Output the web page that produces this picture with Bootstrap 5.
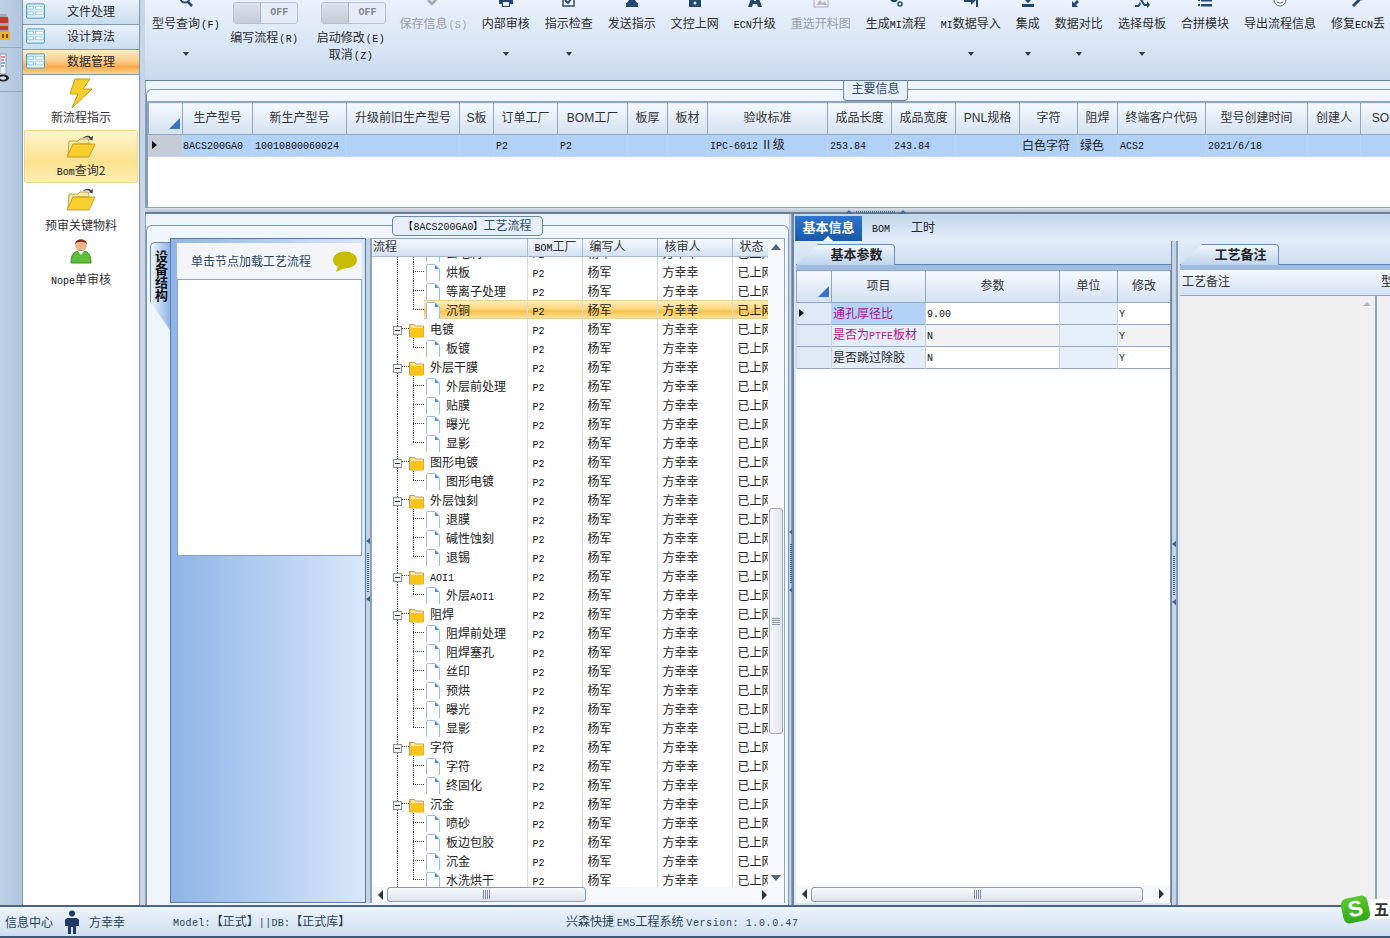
<!DOCTYPE html>
<html lang="zh-CN">
<head>
<meta charset="utf-8">
<title>兴森快捷 EMS工程系统</title>
<link href="https://cdn.jsdelivr.net/npm/bootstrap@5.3.0/dist/css/bootstrap.min.css" rel="stylesheet">
<style>
html,body{margin:0;height:938px;width:1390px;overflow:hidden}
body{font-family:"Noto Sans CJK SC","Liberation Sans",sans-serif;font-size:12px;line-height:14px;color:#222;background:#cfdeef}
.ln{font-family:"Liberation Mono",monospace;font-size:10px;line-height:1;color:#111}
.la{font-family:"Liberation Sans",sans-serif;font-size:12px;line-height:1}
.appw{width:1390px;height:938px}
.rail{width:23px;flex:none;background:linear-gradient(90deg,#bccfe4,#b0c6df);border-right:1px solid #7f95ad}
.railbox{height:48px;border-bottom:1px solid #94a9c1}
.railbox2{height:44px;border-bottom:1px solid #94a9c1}
.railbox svg,.railbox2 svg{display:block}
.navp{width:117px;flex:none;background:#fff;border-right:1px solid #8096ad}
.navh{height:25px;flex:none;background:linear-gradient(#eaf2fb,#c9dbef);border-bottom:1px solid #7f9ab8;padding-bottom:2px}
.navh span{flex:1;text-align:center;padding-right:2px;color:#2a2a2a}
.navh svg{margin-left:3px;flex:none}
.navh.act{background:linear-gradient(#ffeec9 0,#fbc783 50%,#f8a94b 70%,#fcd389)}
.navi{color:#333;text-align:center}
.navi svg{display:block;margin:0 auto}
.ni1{height:55px;padding-top:3px}
.ni1 span{display:block;margin-top:1px}
.ni2{height:53px;padding-top:3px;margin:0 1px;background:linear-gradient(#fff5cf,#fbe28f 60%,#fdeeb4);border:1px solid #efd684;border-radius:2px}
.ni2 span{display:block;margin-top:5px}
.ni3{height:53px;padding-top:4px}
.ni3 span{display:block;margin-top:7px}
.ni4{height:54px;padding-top:1px}
.ni4 span{display:block;margin-top:7px}
.vsp{width:5px;flex:none;background:#c7d6e7}
.mainc{width:1245px;flex:none}
.tbar{height:81px;flex:none;background:linear-gradient(#eaf2fc,#d9e6f5 55%,#c9d9ec);border-bottom:1px solid #65809e;padding-left:7px;overflow:hidden;gap:15px}
.tit{flex:none;text-align:center;color:#2b2b2b;white-space:nowrap;position:relative}
.tit svg.ic{display:block;margin:-8px auto 8px;height:16px;width:16px}
.tit .cap{display:block;height:14px}
.cap .lp{margin-left:1px;letter-spacing:.4px}
.tit.off,.tit.off .ln{color:#9a9fa6}
.car{display:block;width:0;height:0;border:3px solid transparent;border-top:4px solid #2f3a48;border-bottom:0;margin:22px auto 0}
.tog{display:flex;width:65px;height:22px;margin:2px 0 6px;border:1px solid #b5c3d4;border-radius:3px;overflow:hidden;background:#e6edf6}
.tog i{width:27px;flex:none;background:linear-gradient(#dce3ec,#c3cdd9);border-right:1px solid #a9b7c8}
.tog b{flex:1;text-align:center;font:bold 10px/20px "Liberation Mono",monospace;color:#7d8794}
.tit.tw{margin-left:-5px;margin-right:2px}
.tit.tw .tog{margin-left:3px}
.tit.tw2{margin-right:-2px}
.tit.tw2 .tog{margin-left:6px}
.tit.tw2 .cap+.cap{margin-top:3px}
.tit.sv{margin-right:-1px}
.grpa{height:127px;flex:none;background:#edf4fc;position:relative;padding-top:8px;border-left:1px solid #8ca0b7}
.frm{border:1px solid #7f95ae;border-right:0;border-bottom:0;border-top-left-radius:6px;height:100%;background:#f0f6fd;padding-top:11px;overflow:hidden}
.gcap{position:absolute;z-index:3;background:#e7f0fa;border:1px solid #6f88a5;border-top:0;border-radius:0 0 4px 4px;color:#2e4a6a;text-align:center;white-space:nowrap}
.gc1{left:697px;top:0;width:65px;height:20px;line-height:14px}
.gc2{left:246px;top:2px;width:151px;height:20px;line-height:15px;border-top:1px solid #6f88a5;border-radius:4px}
.hsp{height:6px;flex:none;background:linear-gradient(#dbe3ee,#b5c2d2);border-bottom:2px solid #6c7f95;position:relative}
.hspm{position:absolute;left:700px;top:2px;width:62px;height:3px;display:flex;align-items:center;justify-content:space-between;z-index:4}
.tri{width:0;height:0;border:4px solid transparent;border-top:0;border-bottom:4px solid #4d6c92;flex:none}
.dots{flex:1;margin:0 3px;height:2px;background:repeating-linear-gradient(90deg,#4d6c92 0 1px,transparent 1px 2px)}
.gwrap{height:107px;background:#fff;border:1px solid #8ea4bc;border-right:0;overflow:hidden}
.xg{--bs-table-bg:transparent;--bs-border-color:#92a7be;table-layout:fixed;margin:0;border-color:#92a7be}
.xg th,.xg td{padding:0 2px;font-weight:400;white-space:nowrap;overflow:hidden;vertical-align:middle;color:#222}
.xg thead th{text-align:center;background:linear-gradient(#f5f9fe,#d3e1f1);color:#333}
.g1{width:1252px}
.g1 thead tr{height:32px}
.g1 thead th{padding-bottom:3px}
.g1 tbody tr{height:22px}
.g1 tbody td{background:#b1d1f6;border-color:#bcd6f5;border-bottom:1px solid #c3daf6;padding-bottom:2px}
.g1 tbody td.ind{background:#c6ccd6}
.g1 col:nth-child(1){width:34px}.g1 col:nth-child(2){width:70px}.g1 col:nth-child(3){width:94px}.g1 col:nth-child(4){width:113px}.g1 col:nth-child(5){width:34px}.g1 col:nth-child(6){width:64px}.g1 col:nth-child(7){width:70px}.g1 col:nth-child(8){width:40px}.g1 col:nth-child(9){width:40px}.g1 col:nth-child(10){width:120px}.g1 col:nth-child(11){width:64px}.g1 col:nth-child(12){width:64px}.g1 col:nth-child(13){width:64px}.g1 col:nth-child(14){width:58px}.g1 col:nth-child(15){width:40px}.g1 col:nth-child(16){width:88px}.g1 col:nth-child(17){width:102px}.g1 col:nth-child(18){width:53px}.g1 col:nth-child(19){width:40px}
.corner{display:block;margin-left:auto;margin-top:12px}
.arr{display:block;width:0;height:0;border:4px solid transparent;border-right:0;border-left:5px solid #111;margin-left:1px}
.botm{flex:1;min-height:0}
.lpane{width:644px;flex:none;background:#edf4fc;position:relative;padding-top:11px;border-left:1px solid #8ca0b7}
.lframe{height:100%;border:1px solid #7f95ae;border-bottom:0;border-radius:6px 6px 0 0;background:#f0f6fd;padding:12px 3px 2px 3px}
.sidew{width:216px;flex:none;height:100%}
.vtab{width:20px;flex:none;height:88px;margin-top:4px;background:linear-gradient(90deg,#f0f5fc,#8fb4e6);border:1px solid #6b8cb4;border-right:0;border-radius:5px 0 0 0;clip-path:polygon(0 0,100% 0,100% 100%,0 68%);writing-mode:vertical-rl;text-orientation:upright;font-weight:700;font-size:13px;line-height:17px;padding:7px 0 0 0;color:#111}
.spanel{flex:1;background:linear-gradient(90deg,#8fb4e6,#d8e8fb);border:1px solid #587ba6;padding:4px 3px 0 6px}
.shead{height:36px;background:#f3f5f9;color:#2c4766;padding:0 5px 0 14px}
.sbox{height:277px;background:#fff;border:1px solid #8ea3c4}
.vsp2{width:5px;flex:none;background:#c6d3e3;position:relative;border-right:1px solid #8ea3bd}
.mk{position:absolute;left:0;display:block;width:0;height:0;border:3px solid transparent;border-left:0;border-right:4px solid #3f6190}
.m1{top:300px}.m2{top:358px}.m3{top:315px}.m4{top:373px}
.mkd{position:absolute;left:1px;width:2px;height:40px;background:repeating-linear-gradient(#3f6190 0 1px,transparent 1px 2px)}
.d1{top:315px}.d2{top:330px}
.vsp2.thin{width:3px}
.treew{flex:1;min-width:0;background:#fff;border:1px solid #8ea4bc;border-bottom:0;height:100%}
.treev{height:630px;overflow:hidden}
.g2{width:397px;border:0}
.g2 col:nth-child(1){width:155px}.g2 col:nth-child(2){width:55px}.g2 col:nth-child(3){width:75px}.g2 col:nth-child(4){width:75px}.g2 col:nth-child(5){width:37px}
.g2 thead tr,.g2 tbody tr{border-width:0}
.g2 thead tr{height:17px}
.g2 thead th{text-align:left;border-color:#a6b9cf;border-width:0 1px 1px 0;padding:0 0 0 7px;line-height:14px;height:17px;vertical-align:top}
.g2 thead th:first-child{padding-left:1px}
.g2 tbody tr{height:19px}
.g2 tbody td{border-width:0 1px 0 0;border-color:#d5dbe4;padding:0 0 0 5px;line-height:19px;height:19px}
.body2{margin-top:-14px}
.g2 tbody td.tc{--vd:repeating-linear-gradient(#444 0 1px,transparent 1px 2px);--hd:repeating-linear-gradient(90deg,#444 0 1px,transparent 1px 2px);padding:0;border-color:#d5dbe4}
td.fo{background:var(--vd) 25px 0/1px 100% no-repeat,var(--hd) 30px 50%/8px 1px no-repeat!important;padding-left:21px!important}
td.le{background:var(--vd) 25px 0/1px 100% no-repeat,var(--vd) 41px 0/1px 100% no-repeat,var(--hd) 41px 50%/12px 1px no-repeat!important;padding-left:54px!important}
td.le.lst{background:var(--vd) 25px 0/1px 100% no-repeat,var(--vd) 41px 0/1px 50% no-repeat,var(--hd) 41px 50%/12px 1px no-repeat!important}
td.le.sl{background:linear-gradient(#e6d08e,#e6d08e) 52px 0/100% 1px no-repeat,linear-gradient(#e6d08e,#e6d08e) 52px 100%/100% 1px no-repeat,linear-gradient(#fff0c4,#fbd77e 45%,#f9c24e 60%,#fde7a6) 52px 0/100% 100% no-repeat,var(--vd) 25px 0/1px 100% no-repeat,var(--vd) 41px 0/1px 50% no-repeat,var(--hd) 41px 50%/12px 1px no-repeat!important}
tr.sr td:not(.tc){background:linear-gradient(#fff0c4,#fbd77e 45%,#f9c24e 60%,#fde7a6);box-shadow:inset 0 1px #e6d08e,inset 0 -1px #e6d08e}
.tc svg{vertical-align:middle;margin-top:-2px;margin-bottom:-2px}
.tc .fi{margin-left:7px;margin-right:6px}
.tc .di{margin-right:6px}
.vbar{width:16px;flex:none;background:#f6f8fc;padding-top:5px;height:647px}
.vbar .ua{display:block;margin:0 auto;width:0;height:0;border:5px solid transparent;border-top:0;border-bottom:6px solid #5a6674}
.vth{height:226px;margin-top:258px;background:linear-gradient(90deg,#f6f8fc,#dfe6ef);border:1px solid #9aa9bb;border-radius:3px;width:14px;margin-left:1px}
.vth i{display:block;width:8px;height:7px;background:repeating-linear-gradient(#8896a8 0 1px,transparent 1px 2px)}
.vbar .da{display:block;margin:141px auto 0;width:0;height:0;border:5px solid transparent;border-bottom:0;border-top:6px solid #5a6674}
.hbar{height:16px;background:#f6f8fc;flex:none;padding:0 6px}
.hth{background:linear-gradient(#f8fafd,#dde4ee);border:1px solid #8b9aad;border-radius:3px;height:15px;flex:none}
.hth.wd1{width:199px}
.hth i{display:block;width:7px;height:9px;background:repeating-linear-gradient(90deg,#7f8da0 0 1px,transparent 1px 2px)}
.la1,.ra1{width:0;height:0;border:5px solid transparent;flex:none}
.la1{border-left:0;border-right:5px solid #333}
.ra1{border-right:0;border-left:5px solid #333}
.sp16{width:11px;flex:none}
.rpane{flex:1;min-width:0;position:relative;border-left:2px solid #6f86a3;background:#d9e6f5}
.rtabs{height:27px;flex:none;background:linear-gradient(#c3d6ec,#e4eefa);padding:2px 0 0 1px}
.rt{height:25px;line-height:22px;text-align:center}
.rt1{width:67px;background:linear-gradient(#2f74cd,#195aa8);color:#fff;font-weight:700;font-size:13px;position:relative}
.rt1:after{content:"";position:absolute;left:28px;bottom:0;width:0;height:0;border:5px solid transparent;border-top:0;border-bottom:5px solid #fff}
.rt2{margin-left:10px;width:17px}
.rt3{margin-left:22px;width:24px}
.rsub{flex:1;min-height:0}
.pane1{width:377px;flex:none;padding-left:2px;background:#dbe7f5}
.pane2{flex:1;min-width:0;padding-left:2px;background:#dbe7f5;border-left:2px solid #8aa0ba}
.vsp3{width:5px;flex:none;background:#c6d3e3;position:relative;border-left:1px solid #6f86a3}
.ptabw{height:24px;flex:none;padding-top:3px;background:linear-gradient(#e1ecf8,#d0dff0);border-bottom:1px solid #5f86b6}
.ptab{width:99px;height:21px;background:linear-gradient(#f0f6fd,#bed4ed);border:1px solid #6d8eb6;border-bottom:0;border-radius:4px 4px 0 0;clip-path:polygon(22% 0,100% 0,100% 100%,0 100%);font-weight:700;font-size:13px;text-align:center;line-height:18px;padding-left:22px;color:#222}
.pband{height:5px;flex:none;background:#9fbce0}
.g3{width:374px}
.g3 col:nth-child(1){width:35px}.g3 col:nth-child(2){width:94px}.g3 col:nth-child(3){width:134px}.g3 col:nth-child(4){width:58px}.g3 col:nth-child(5){width:53px}
.g3 thead tr{height:32px}
.g3 thead th{padding-bottom:3px}
.g3 tbody tr{height:22px}
.g3 tbody td{border-color:#c4d4e6;padding:0 1px 2px}
.g3 td.ind{background:#dfe9f6}
.g3 td.itm{background:#e4eefa}
.g3 td.un{background:#e6f0fb}
.g3 tr.r1 td.itm{background:#b2d2f6;color:#a8128f}
.g3 tr.r2 td.itm,.g3 tr.r2 td.itm .ln{color:#c01082}
.g3 tr.r2 td.va,.g3 tr.r2 td.mo{background:#f2f2f2}
.pbody{flex:1;min-height:0;background:#fff;border-right:1px solid #7f95ae;overflow:hidden}
.hb3{height:18px;background:#f6f8fc;flex:none;padding:0 6px;border-right:1px solid #7f95ae;margin-bottom:2px}
.nhead{height:26px;flex:none;background:linear-gradient(#f5f9fe,#d3e1f1);border-bottom:1px solid #92a7be;padding-bottom:3px}
.nh1{width:197px;flex:none;padding-left:2px;color:#333}
.nbody{flex:1;min-height:0;background:#efefef}
.nbm{width:197px;flex:none;display:flex;justify-content:flex-end;border-right:2px solid #8aa4c4}
.nsb{width:16px;background:#f0f0f0;height:100%;padding-top:6px}
.nsb .ua{display:block;margin:0 auto;width:0;height:0;border:4px solid transparent;border-top:0;border-bottom:4px solid #b5b5b5}
.stat{height:33px;flex:none;background:linear-gradient(#edf4fc,#cfdff0);border-top:2px solid #4c6483;border-bottom:2px solid #3f5873;padding-left:5px;color:#2a3f58;white-space:nowrap;position:relative}
.stat .ln{color:#2a3f58;letter-spacing:.3px}
.stat .lv{letter-spacing:.6px}
.stat .s1{width:48px}
.stat svg{margin:0 10px 0 12px;flex:none}
.stat .s2{width:84px}
.stat .s3{width:393px}
.sogou{position:absolute;right:0;top:-11px;display:flex;align-items:center;z-index:5;width:48px;height:26px}
.sgi{width:27px;height:25px;border-radius:6px;background:linear-gradient(#5cc92f,#2ea81a);transform:rotate(-12deg);color:#fff;font:700 22px/24px "Liberation Sans",sans-serif;text-align:center;flex:none;z-index:1}
.sgt{flex:1;background:#fff;height:20px;margin-left:-2px;padding-left:7px;font-size:15px;line-height:20px;color:#333;font-weight:700;overflow:hidden}
</style>
</head>
<body>
<svg width="0" height="0" class="d-none">
 <defs>
  <symbol id="navic" viewBox="0 0 20 16"><rect x=".5" y=".5" width="19" height="15" rx="1.5" fill="#dff0fb" stroke="#3d9ab8"/><rect x="2" y="3" width="6" height="3" fill="#fff" stroke="#58b3c8" stroke-width=".7"/><rect x="2" y="9" width="6" height="3" fill="#fff" stroke="#58b3c8" stroke-width=".7"/><rect x="10" y="3" width="8" height="3" fill="#fff" stroke="#7aa" stroke-width=".5"/><rect x="10" y="9" width="8" height="3" fill="#fff" stroke="#7aa" stroke-width=".5"/></symbol>
  <symbol id="fold" viewBox="0 0 30 24"><path d="M2 21 L3 7 h9 l2-2 h8 l1 3 v2 H9z" fill="#f6e9a8" stroke="#b2932c" stroke-width=".8"/><path d="M1 23 L7 10 H29 L23 23z" fill="#f7cf2e" stroke="#b78e1c" stroke-width=".8"/><path d="M17 4 q4-4 8-1 l2-1 -.5 4.500 -4-1.500 1.500-.8 q-3-2-6.500 0" fill="#444"/></symbol>
  <symbol id="doc" viewBox="0 0 14 18"><path d="M1.5.5h7.500l4.500 4.500v11a1.500 1.500 0 0 1-1.500 1.500h-10.500a1 1 0 0 1-1-1v-15z" fill="#fbfdff" stroke="#9cbce4"/><path d="M9 .8 13 5H9z" fill="#4d8fdc"/></symbol>
  <symbol id="fld" viewBox="0 0 15 16"><path d="M.5 2.500h5l1 1.500h8v11h-14z" fill="#fbe9a4" stroke="#c9a33d"/><path d="M2 6h12.500v9H2z" fill="#fdc418"/><path d="M.5 2.500V15" stroke="#d89d27" stroke-width="2"/></symbol>
  <symbol id="exp" viewBox="0 0 9 9"><rect x=".5" y=".5" width="8" height="8" fill="#eef1f5" stroke="#8a8f96"/><path d="M2 4.500h5" stroke="#333"/></symbol>
  <symbol id="cor" viewBox="0 0 11 11"><path d="M11 0V11H0z" fill="#3a73c4"/></symbol>
 </defs>
</svg>
<div class="appw d-flex flex-column">
 <div class="d-flex flex-grow-1 overflow-hidden">
  <div class="rail">
   <div class="railbox"><svg width="22" height="47" viewBox="0 0 22 47"><path d="M0 14h6l3 5v21H0z" fill="#a9a9a9"/><path d="M0 17h8v6H0zM0 26h8v4H0z" fill="#c0392b"/><path d="M0 32h10v8H0z" fill="#e8b42a"/><path d="M2 34h2v4H2zM6 34h2v4H6z" fill="#7a4a10"/></svg></div>
   <div class="railbox2"><svg width="22" height="43" viewBox="0 0 22 43"><path d="M0 6h6v20H0z" fill="#e8eef5" stroke="#778" stroke-width=".6"/><path d="M1 9h4M1 12h3" stroke="#c33"/><path d="M1 15h4M1 18h3" stroke="#36a"/><ellipse cx="3" cy="30" rx="6" ry="3.500" fill="#222"/><ellipse cx="3" cy="30" rx="3" ry="1.800" fill="#dde"/></svg></div>
  </div>
  <div class="navp d-flex flex-column">
   <div class="navh d-flex align-items-center"><svg width="19" height="16"><use href="#navic"/></svg><span>文件处理</span></div>
   <div class="navh d-flex align-items-center"><svg width="19" height="16"><use href="#navic"/></svg><span>设计算法</span></div>
   <div class="navh act d-flex align-items-center"><svg width="19" height="16"><use href="#navic"/></svg><span>数据管理</span></div>
   <div class="navi ni1"><svg width="24" height="31" viewBox="0 0 24 31"><path d="M6 1h15l-7 10h9L3 30l6-14H1z" fill="#f5d02c" stroke="#c59a1a"/></svg><span>新流程指示</span></div>
   <div class="navi ni2"><svg width="30" height="24"><use href="#fold"/></svg><span><span class="ln d-inline m-0">Bom</span>查询2</span></div>
   <div class="navi ni3"><svg width="30" height="24"><use href="#fold"/></svg><span>预审关键物料</span></div>
   <div class="navi ni4"><svg width="22" height="28" viewBox="0 0 22 28"><circle cx="11" cy="8" r="6" fill="#e8b48a"/><path d="M5 7c0-6 12-6 12 0-2-3-10-3-12 0z" fill="#8a2318"/><path d="M1 26c0-10 4-12 10-12s10 2 10 12z" fill="#5fbd3a" stroke="#3d8a25"/><path d="M8 14l3 4 3-4z" fill="#fff"/></svg><span><span class="ln d-inline m-0">Nope</span>单审核</span></div>
  </div>
  <div class="vsp"></div>
  <div class="mainc d-flex flex-column">
   <div class="tbar d-flex align-items-start">
    <div class="tit"><svg class="ic" viewBox="0 0 16 16"><circle cx="7" cy="6" r="4.500" fill="none" stroke="#24476f" stroke-width="2"/><path d="M10 10l4 4" stroke="#24476f" stroke-width="2.500"/></svg><span class="cap">型号查询<span class="ln lp">(F)</span></span><i class="car"></i></div>
    <div class="tit tw"><div class="tog"><i></i><b>OFF</b></div><span class="cap">编写流程<span class="ln lp">(R)</span></span></div>
    <div class="tit tw2"><div class="tog"><i></i><b>OFF</b></div><span class="cap">启动修改<span class="ln lp">(E)</span></span><span class="cap">取消<span class="ln lp">(Z)</span></span></div>
    <div class="tit off sv"><svg class="ic" viewBox="0 0 16 16"><path d="M2 8l4 4 8-9" fill="none" stroke="#a0a6ad" stroke-width="2.500"/></svg><span class="cap">保存信息<span class="ln lp">(S)</span></span></div>
    <div class="tit"><svg class="ic" viewBox="0 0 16 16"><path d="M4 1h8v5H4zM1 6h14v6h-3v3H4v-3H1z" fill="#24476f"/><path d="M5 10h6v4H5z" fill="#e6eef8"/></svg><span class="cap">内部审核</span><i class="car"></i></div>
    <div class="tit"><svg class="ic" viewBox="0 0 16 16"><rect x="2" y="3" width="11" height="11" fill="#fff" stroke="#24476f" stroke-width="1.500"/><path d="M4 8l3 3 7-9" fill="none" stroke="#24476f" stroke-width="2"/></svg><span class="cap">指示检查</span><i class="car"></i></div>
    <div class="tit"><svg class="ic" viewBox="0 0 16 16"><path d="M6 1h4v7H6zM2 11h12v4H2z" fill="#24476f"/><path d="M5 8h6l2 3H3z" fill="#24476f"/></svg><span class="cap">发送指示</span></div>
    <div class="tit"><svg class="ic" viewBox="0 0 16 16"><path d="M4 7V5a4 4 0 0 1 8 0v2h2v8H2V7z" fill="#24476f"/><circle cx="8" cy="11" r="1.500" fill="#e6eef8"/></svg><span class="cap">文控上网</span></div>
    <div class="tit"><svg class="ic" viewBox="0 0 16 16"><path d="M6 1h4l5 14h-4l-1-3H6l-1 3H1zM7 9h2L8 5z" fill="#24476f" fill-rule="evenodd"/></svg><span class="cap"><span class="ln">ECN</span>升级</span></div>
    <div class="tit off"><svg class="ic" viewBox="0 0 16 16"><rect x="1" y="1" width="14" height="14" fill="#eef1f5" stroke="#aab"/><path d="M3 13l4-5 3 3 2-2 2 4z" fill="#b5bbc3"/></svg><span class="cap">重选开料图</span></div>
    <div class="tit"><svg class="ic" viewBox="0 0 16 16"><circle cx="6" cy="6" r="3" fill="none" stroke="#24476f" stroke-width="2.500"/><circle cx="12" cy="12" r="2" fill="none" stroke="#24476f" stroke-width="1.500"/></svg><span class="cap">生成<span class="ln">MI</span>流程</span></div>
    <div class="tit"><svg class="ic" viewBox="0 0 16 16"><path d="M1 6h7V3l5 5-5 5v-3H1z" fill="#24476f"/><path d="M13 1h2v14h-2z" fill="#24476f"/></svg><span class="cap"><span class="ln">MI</span>数据导入</span><i class="car"></i></div>
    <div class="tit"><svg class="ic" viewBox="0 0 16 16"><path d="M6 1h4v5h3l-5 5-5-5h3zM2 12h12v3H2z" fill="#24476f"/></svg><span class="cap">集成</span><i class="car"></i></div>
    <div class="tit"><svg class="ic" viewBox="0 0 16 16"><path d="M9 1h6v6l-2-2-3 3-2-2 3-3zM1 15V9l2 2 3-3 2 2-3 3 2 2z" fill="#24476f"/></svg><span class="cap">数据对比</span><i class="car"></i></div>
    <div class="tit"><svg class="ic" viewBox="0 0 16 16"><path d="M1 3h4l6 9h2V9l3 4-3 3v-2h-3L4 5H1zM1 13h3l2-3 1 2-2 3H1zM10 5l1-2h2V0l3 4-3 3V5z" fill="#24476f"/></svg><span class="cap">选择母板</span><i class="car"></i></div>
    <div class="tit"><svg class="ic" viewBox="0 0 16 16"><path d="M4 2h11v2.500H4zM4 7h11v2.500H4zM4 12h11v2.500H4zM1 2h2v2H1zM1 7h2v2H1zM1 12h2v2H1z" fill="#24476f"/></svg><span class="cap">合拼模块</span></div>
    <div class="tit"><svg class="ic" viewBox="0 0 16 16"><circle cx="8" cy="8" r="6" fill="#fff" stroke="#4d6c92"/><path d="M5 10q3 2.500 6 0" fill="none" stroke="#4d6c92"/></svg><span class="cap">导出流程信息</span></div>
    <div class="tit"><svg class="ic" viewBox="0 0 16 16"><path d="M2 13l7-7a4 4 0 0 1 5-5l-3 3 2 2 3-3a4 4 0 0 1-5 5l-7 7z" fill="#24476f"/></svg><span class="cap">修复<span class="ln">ECN</span>丢</span></div>
   </div>
   <div class="grpa">
    <div class="gcap gc1">主要信息</div>
    <div class="frm">
     <div class="gwrap">
      <table class="table table-bordered xg g1">
       <colgroup><col><col><col><col><col><col><col><col><col><col><col><col><col><col><col><col><col><col><col></colgroup>
       <thead><tr><th><svg class="corner" width="11" height="11"><use href="#cor"/></svg></th><th>生产型号</th><th>新生产型号</th><th>升级前旧生产型号</th><th><span class="la">S</span>板</th><th>订单工厂</th><th><span class="la">BOM</span>工厂</th><th>板厚</th><th>板材</th><th>验收标准</th><th>成品长度</th><th>成品宽度</th><th><span class="la">PNL</span>规格</th><th>字符</th><th>阻焊</th><th>终端客户代码</th><th>型号创建时间</th><th>创建人</th><th><span class="la">SO</span></th></tr></thead>
       <tbody><tr><td class="ind"><i class="arr"></i></td><td class="px-0"><span class="ln">8ACS200GA0</span></td><td><span class="ln">10010800060024</span></td><td></td><td></td><td><span class="ln">P2</span></td><td><span class="ln">P2</span></td><td></td><td></td><td><span class="ln">IPC-6012</span> Ⅱ级</td><td><span class="ln">253.84</span></td><td><span class="ln">243.84</span></td><td></td><td>白色字符</td><td>绿色</td><td><span class="ln">ACS2</span></td><td><span class="ln">2021/6/18</span></td><td></td><td></td></tr></tbody>
      </table>
     </div>
    </div>
   </div>
   <div class="hsp"><div class="hspm"><i class="tri"></i><i class="dots"></i><i class="tri"></i></div></div>
   <div class="botm d-flex">
    <div class="lpane">
     <div class="gcap gc2"><span class="ln">【8ACS200GA0】</span>工艺流程</div>
     <div class="lframe d-flex">
      <div class="sidew d-flex">
       <div class="vtab">设备结构</div>
       <div class="spanel">
        <div class="shead d-flex align-items-center justify-content-between"><span>单击节点加载工艺流程</span><svg width="25" height="21" viewBox="0 0 25 21"><ellipse cx="13" cy="9" rx="12" ry="8.500" fill="#c8bc02"/><path d="M4 21l3-8 6 4z" fill="#c8bc02"/></svg></div>
        <div class="sbox"></div>
       </div>
      </div>
      <div class="vsp2"><i class="mk m1"></i><i class="mkd d1"></i><i class="mk m2"></i></div>
      <div class="treew d-flex flex-column">
       <div class="d-flex">
        <div class="flex-grow-1 overflow-hidden">
         <table class="table table-bordered xg g2"><colgroup><col><col><col><col><col></colgroup><thead><tr><th>流程</th><th><span class="ln">BOM</span>工厂</th><th>编写人</th><th>核审人</th><th>状态</th></tr></thead></table>
         <div class="treev"><div class="body2"><table class="table table-bordered xg g2"><colgroup><col><col><col><col><col></colgroup><tbody id="tb"></tbody></table></div></div>
        </div>
        <div class="vbar"><i class="ua"></i><div class="vth d-flex align-items-center justify-content-center"><i></i></div><i class="da"></i></div>
       </div>
       <div class="hbar d-flex align-items-center"><i class="la1"></i><div class="hth wd1 d-flex align-items-center justify-content-center ms-1"><i></i></div><div class="flex-grow-1"></div><i class="ra1"></i><div class="sp16"></div></div>
      </div>
     </div>
    </div>
    <div class="vsp2 thin"><i class="mk m3"></i><i class="mkd d2"></i><i class="mk m4"></i></div>
    <div class="rpane d-flex flex-column">
     <div class="rtabs d-flex align-items-start">
      <div class="rt rt1">基本信息</div><div class="rt rt2"><span class="ln">BOM</span></div><div class="rt rt3">工时</div>
     </div>
     <div class="rsub d-flex">
      <div class="pane1 d-flex flex-column">
       <div class="ptabw"><div class="ptab">基本参数</div></div>
       <div class="pband"></div>
       <div class="pbody">
        <table class="table table-bordered xg g3"><colgroup><col><col><col><col><col></colgroup>
         <thead><tr><th><svg class="corner" width="11" height="11"><use href="#cor"/></svg></th><th>项目</th><th>参数</th><th>单位</th><th>修改</th></tr></thead>
         <tbody>
          <tr class="r1"><td class="ind"><i class="arr"></i></td><td class="itm">通孔厚径比</td><td class="va"><span class="ln">9.00</span></td><td class="un"></td><td class="mo"><span class="ln">Y</span></td></tr>
          <tr class="r2"><td class="ind"></td><td class="itm">是否为<span class="ln">PTFE</span>板材</td><td class="va"><span class="ln">N</span></td><td class="un"></td><td class="mo"><span class="ln">Y</span></td></tr>
          <tr class="r3"><td class="ind"></td><td class="itm">是否跳过除胶</td><td class="va"><span class="ln">N</span></td><td class="un"></td><td class="mo"><span class="ln">Y</span></td></tr>
         </tbody></table>
       </div>
       <div class="hb3 d-flex align-items-center"><i class="la1"></i><div class="hth d-flex align-items-center justify-content-center ms-1 flex-grow-1"><i></i></div><i class="ra1 ms-3"></i></div>
      </div>
      <div class="vsp3"><i class="mk m1"></i><i class="mkd d1"></i><i class="mk m2"></i></div>
      <div class="pane2 d-flex flex-column">
       <div class="ptabw"><div class="ptab">工艺备注</div></div>
       <div class="pband"></div>
       <div class="nhead d-flex align-items-center"><div class="nh1">工艺备注</div><div class="ps-1">型</div></div>
       <div class="nbody d-flex"><div class="nbm"><div class="nsb"><i class="ua"></i></div></div></div>
      </div>
     </div>
    </div>
   </div>
  </div>
 </div>
 <div class="stat d-flex align-items-center">
  <span class="s1">信息中心</span>
  <svg width="14" height="24" viewBox="0 0 14 24"><circle cx="7" cy="3.500" r="3" fill="#1d3a66"/><path d="M2 8h10l2 2v6h-3v8H8v-7H6v7H3v-8H0v-6z" fill="#1d3a66"/></svg>
  <span class="s2">方幸幸</span>
  <span class="s3"><span class="ln">Model:</span>【正式】<span class="ln">||DB:</span>【正式库】</span>
  <span>兴森快捷 <span class="ln">EMS</span>工程系统 <span class="ln lv">Version: 1.0.0.47</span></span>
  <div class="sogou"><div class="sgi">S</div><div class="sgt">五</div></div>
 </div>
</div>
<script>
var rows=[["去毛刺",0],["烘板",0],["等离子处理",0],["沉铜",2],["电镀",1],["板镀",3],["外层干膜",1],["外层前处理",0],["贴膜",0],["曝光",0],["显影",3],["图形电镀",1],["图形电镀",3],["外层蚀刻",1],["退膜",0],["碱性蚀刻",0],["退锡",3],["AOI1",1],["外层AOI1",3],["阻焊",1],["阻焊前处理",0],["阻焊塞孔",0],["丝印",0],["预烘",0],["曝光",0],["显影",3],["字符",1],["字符",0],["终固化",3],["沉金",1],["喷砂",0],["板边包胶",0],["沉金",0],["水洗烘干",3]];
var lat=function(s){return s.replace(/[A-Z0-9]+/g,'<span class="ln">$&</span>')};
document.getElementById('tb').innerHTML=rows.map(function(r){
 var k=r[1],cls,ic;
 if(k==1){cls='fo';ic='<svg width="9" height="9"><use href="#exp"/></svg><svg class="fi" width="15" height="16"><use href="#fld"/></svg>';}
 else{cls='le'+(k==3?' lst':'')+(k==2?' sl lst':'');ic='<svg class="di" width="14" height="18"><use href="#doc"/></svg>';}
 return '<tr'+(k==2?' class="sr"':'')+'><td class="tc '+cls+'">'+ic+lat(r[0])+'</td><td><span class="ln">P2</span></td><td>杨军</td><td>方幸幸</td><td>已上网</td></tr>';
}).join('');
</script>
</body>
</html>
